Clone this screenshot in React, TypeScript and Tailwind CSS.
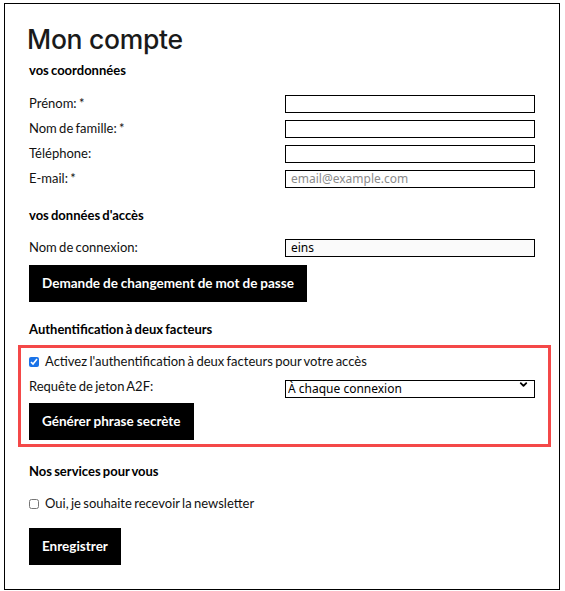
import { ChevronDown } from "lucide-react";

const lato = { fontFamily: "Lato, 'Liberation Sans', sans-serif", wordSpacing: "-1px" };
const inputFont = { fontFamily: "'Noto Sans', 'Open Sans', sans-serif" };

const contactFields = [
  { label: "Prénom: *", placeholder: "" },
  { label: "Nom de famille: *", placeholder: "" },
  { label: "Téléphone:", placeholder: "" },
  { label: "E-mail: *", placeholder: "email@example.com" },
];

function Field({ label, children }: { label: string; children: React.ReactNode }) {
  return (
    <div className="flex h-[25px] items-center">
      <span className="w-[256px] text-[13px] text-[#111]">{label}</span>
      {children}
    </div>
  );
}

function TextInput({ placeholder = "", value, readOnly }: { placeholder?: string; value?: string; readOnly?: boolean }) {
  return (
    <input
      type="text"
      placeholder={placeholder}
      defaultValue={value}
      readOnly={readOnly}
      className={`h-[18px] w-[250px] border border-black px-[5px] text-[12px] text-black outline-none placeholder:text-[#8a8a8a] ${
        readOnly ? "bg-[#fafafa]" : "bg-white"
      }`}
      style={inputFont}
    />
  );
}

function BlackButton({ children }: { children: React.ReactNode }) {
  return (
    <button
      className="h-[37px] w-fit bg-black px-[13px] text-[13.5px] font-bold text-white"
      style={{ wordSpacing: "-0.3px" }}
    >
      {children}
    </button>
  );
}

export default function App() {
  return (
    <div className="bg-white pt-[3px]">
      <div
        className="ml-1 w-[556px] border border-black pb-[24px] pl-[24px] pt-[19px]"
        style={lato}
      >
        {/* Title */}
        <h1
          className="-ml-[2px] h-[32px] text-[26.5px] font-medium leading-[32px] tracking-[-0.3px] text-[#1a1a1a]"
          style={{ fontFamily: "Inter, 'Liberation Sans', sans-serif", wordSpacing: "0" }}
        >
          Mon compte
        </h1>

        {/* Contact details */}
        <h2 className="mt-[5px] text-[13px] font-bold leading-[20px] text-black">vos coordonnées</h2>
        <div className="mt-[11px]">
          {contactFields.map((f) => (
            <Field key={f.label} label={f.label}>
              <TextInput placeholder={f.placeholder} />
            </Field>
          ))}
        </div>

        {/* Access data */}
        <h2 className="mt-[14px] text-[13px] font-bold leading-[20px] text-black">vos données d'accès</h2>
        <div className="mt-[10px]">
          <Field label="Nom de connexion:">
            <TextInput value="eins" readOnly />
          </Field>
        </div>
        <div className="mt-[5px]">
          <BlackButton>Demande de changement de mot de passe</BlackButton>
        </div>

        {/* Two-factor */}
        <h2 className="mt-[17px] text-[13px] font-bold leading-[20px] text-black">
          Authentification à deux facteurs
        </h2>
        <div className="-ml-[11px] mt-[6px] w-[533px] border-[3px] border-[#f44848] pb-[4px] pl-[8px] pt-[4px]">
          <label className="flex h-[20px] items-center gap-[6px] text-[13px] text-[#111]">
            <input type="checkbox" defaultChecked className="h-[10px] w-[10px] accent-[#1a73e8]" />
            Activez l'authentification à deux facteurs pour votre accès
          </label>
          <div className="mt-[2px] flex h-[25px] items-center">
            <span className="w-[256px] text-[13px] text-[#111]">Requête de jeton A2F:</span>
            <div className="relative">
              <select
                className="h-[18px] w-[250px] appearance-none border border-black bg-white pl-[2px] text-[12px] leading-[16px] text-black outline-none"
                style={inputFont}
                defaultValue="each"
              >
                <option value="each">À chaque connexion</option>
              </select>
              <ChevronDown
                className="pointer-events-none absolute right-[6px] top-[4px] h-[11px] w-[11px] text-black"
                strokeWidth={4}
              />
            </div>
          </div>
          <div className="mt-[4px]">
            <BlackButton>Générer phrase secrète</BlackButton>
          </div>
        </div>

        {/* Services */}
        <h2 className="mt-[14px] text-[13px] font-bold leading-[20px] text-black">Nos services pour vous</h2>
        <label className="mt-[13px] flex h-[20px] items-center gap-[6px] text-[13px] text-[#111]">
          <input type="checkbox" className="h-[10px] w-[10px] accent-[#1a73e8]" />
          Oui, je souhaite recevoir la newsletter
        </label>
        <div className="mt-[14px]">
          <BlackButton>Enregistrer</BlackButton>
        </div>
      </div>
    </div>
  );
}
